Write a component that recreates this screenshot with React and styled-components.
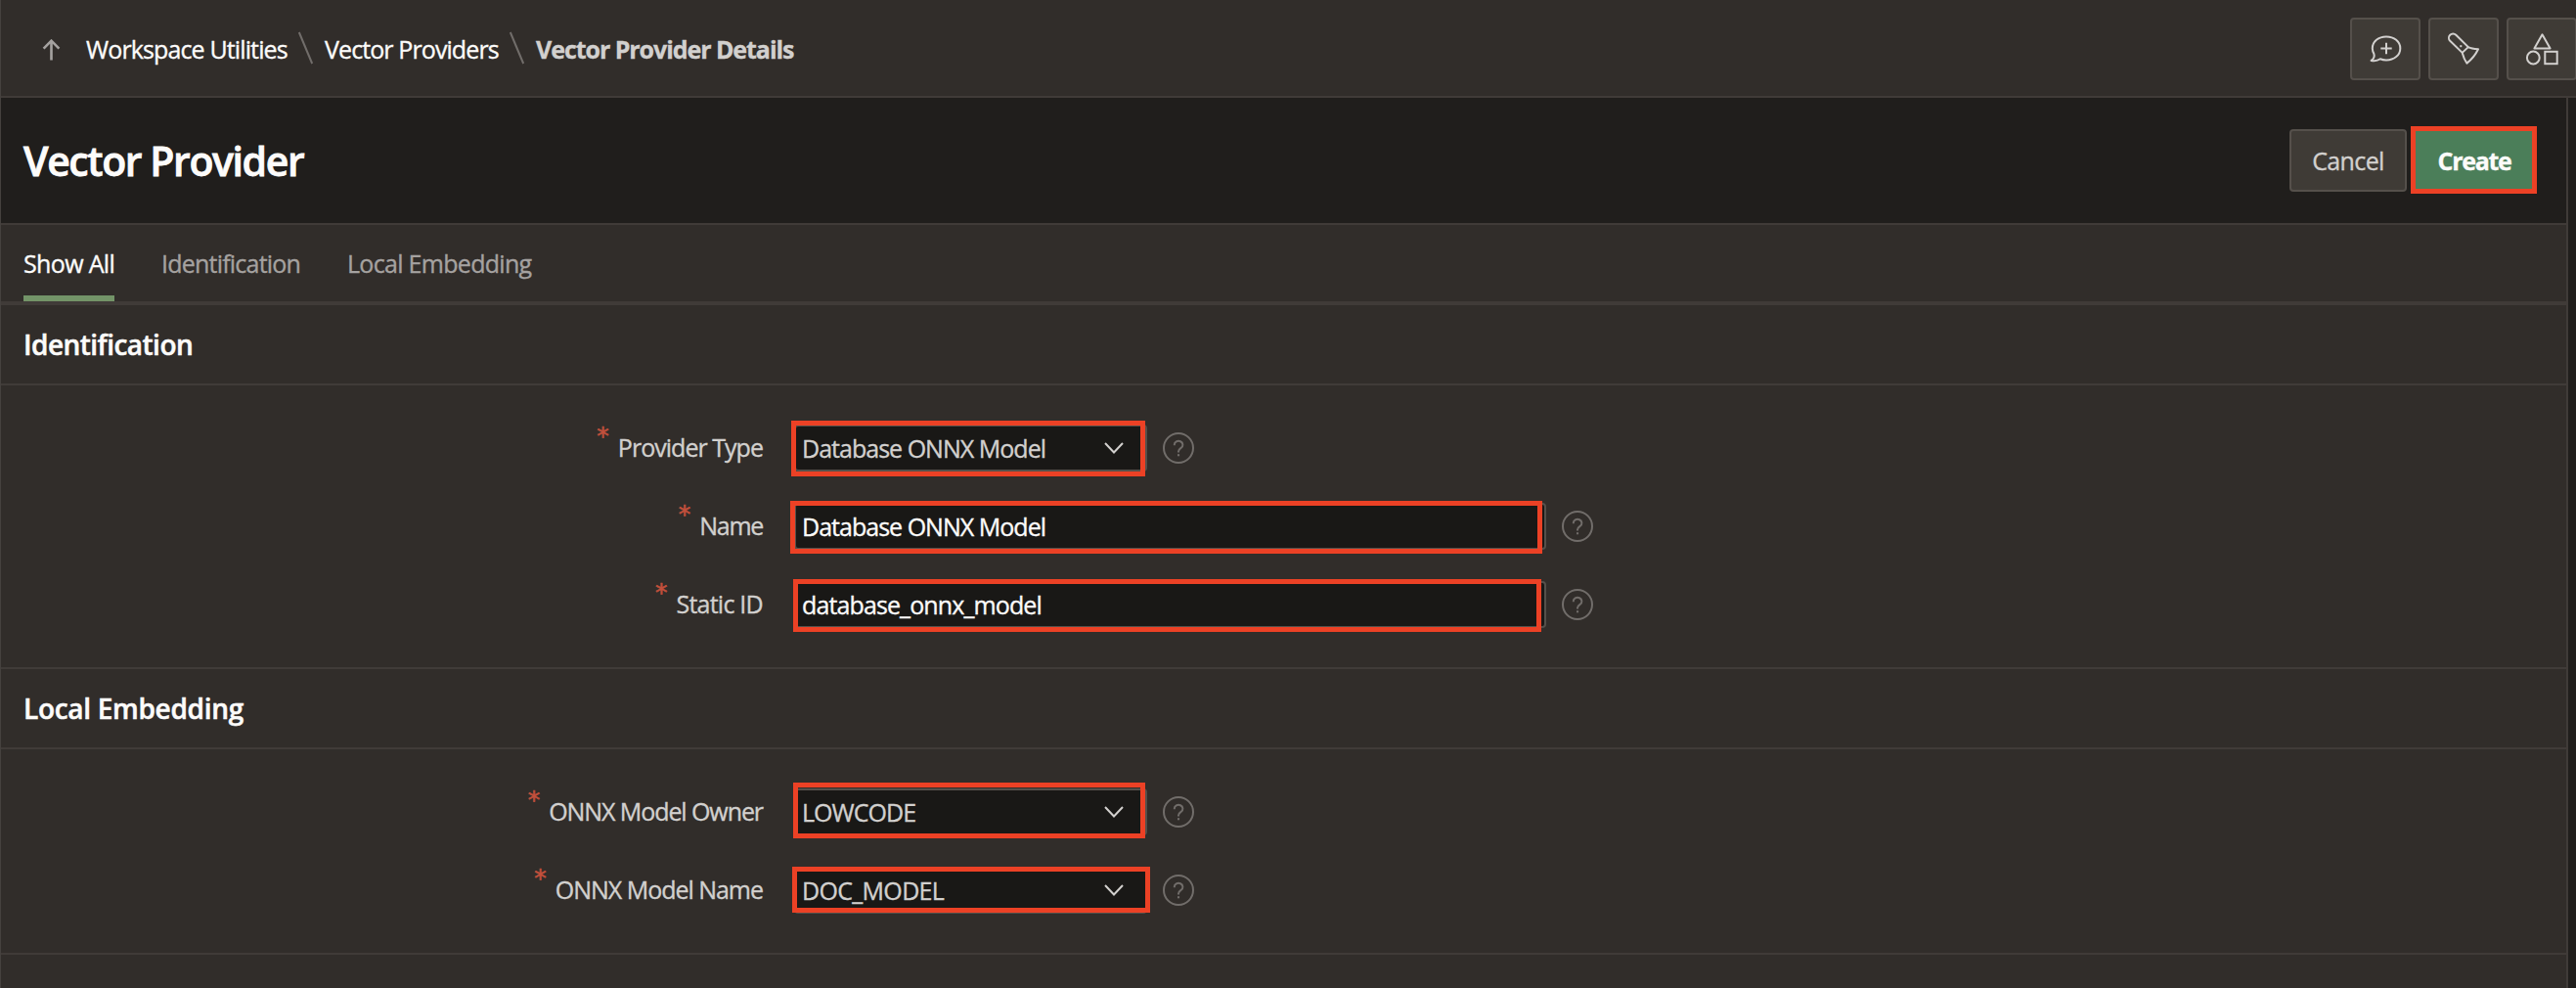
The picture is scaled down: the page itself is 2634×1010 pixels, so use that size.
import React from "react";
import styled, { createGlobalStyle } from "styled-components";

const c = {
  page: "#312d2a",
  dark: "#201e1c",
  field: "#191816",
  line: "#403b38",
  button: "#3f3b36",
  buttonLine: "#55504b",
  fieldLine: "#55504b",
  text: "#fcfbfa",
  soft: "#d2d0ce",
  muted: "#a5a2a0",
  dim: "#716d6a",
  green: "#4b7e59",
  tab: "#739468",
  red: "#ec4125",
  star: "#c2503c",
};

const GlobalStyle = createGlobalStyle`
  *, *::before, *::after { box-sizing: border-box; }
  html { overflow: hidden; }
  body {
    margin: 0;
    background: ${c.page};
    color: ${c.text};
    font-family: "Open Sans", "Noto Sans", sans-serif;
    font-size: 25px;
    line-height: 34px;
    -webkit-text-stroke: 0.35px currentColor;
  }
`;

const Page = styled.div`
  display: flex;
  flex-direction: column;
  height: 1010px;
  width: 2634px;
  overflow: hidden;
  border-left: 1px solid #45413e;
`;

const TopBar = styled.header`
  display: flex;
  justify-content: space-between;
  align-items: center;
  flex: none;
  height: 100px;
  padding-left: 42px;
  border-bottom: 2px solid ${c.line};
`;

const Crumbs = styled.nav`
  display: flex;
  align-items: center;
`;

const UpIcon = styled.svg`
  margin-right: 26px;
  margin-top: 4px;
`;

const Crumb = styled.span`
  width: ${(p) => p.$w}px;
  padding-top: 1px;
  white-space: nowrap;
  letter-spacing: ${(p) => p.$ls}px;
  font-weight: ${(p) => (p.$current ? 700 : 400)};
  color: ${(p) => (p.$current ? c.soft : c.text)};
`;

const Slash = styled.svg`
  margin: 0 10px 0 9px;
`;

const Tools = styled.div`
  display: flex;
  gap: 8px;
  margin: 2px -1px 0 0;
`;

const ToolButton = styled.button`
  width: 72px;
  height: 64px;
  padding: 0;
  display: flex;
  align-items: center;
  justify-content: center;
  background: ${c.button};
  border: 2px solid ${c.buttonLine};
  border-radius: 4px;
  color: ${c.soft};
`;

const Body = styled.div`
  flex: 1;
  display: flex;
  background: ${c.dark};
`;

const Main = styled.main`
  width: 2625px;
  border-right: 2px solid ${c.line};
  background: ${c.page};
`;

const TitleBar = styled.div`
  display: flex;
  align-items: center;
  justify-content: space-between;
  height: 130px;
  padding: 0 33px 0 23px;
  background: ${c.dark};
  border-bottom: 2px solid ${c.line};
`;

const Title = styled.h1`
  margin: 0;
  font-size: 41px;
  font-weight: 600;
  line-height: 56px;
  letter-spacing: -1.4px;
  -webkit-text-stroke-width: 0.8px;
`;

const Actions = styled.div`
  display: flex;
  gap: 8px;
`;

const Button = styled.button`
  position: relative;
  width: ${(p) => p.$w}px;
  height: 64px;
  padding: 0 0 1px;
  background: ${(p) => (p.$hot ? c.green : c.button)};
  border: 2px solid ${(p) => (p.$hot ? c.green : c.buttonLine)};
  border-radius: 4px;
  color: ${(p) => (p.$hot ? c.text : c.soft)};
  font: ${(p) => (p.$hot ? 700 : 400)} 25px "Open Sans", sans-serif;
  letter-spacing: ${(p) => (p.$hot ? -1.3 : -0.6)}px;
`;

const Frame = styled.span`
  position: absolute;
  inset: ${(p) => p.$inset};
  border: 5px solid ${c.red};
  pointer-events: none;
`;

const Tabs = styled.div`
  display: flex;
  gap: 48px;
  height: 82px;
  padding-left: 23px;
  border-bottom: 4px solid ${c.line};
`;

const Tab = styled.div`
  width: ${(p) => p.$w}px;
  height: 78px;
  line-height: 78px;
  white-space: nowrap;
  letter-spacing: ${(p) => p.$ls}px;
  color: ${(p) => (p.$active ? c.text : c.muted)};
  box-shadow: ${(p) => (p.$active ? `inset 0 -6px ${c.tab}` : "none")};
`;

const SectionTitle = styled.h2`
  margin: 0;
  height: 82px;
  padding-left: 23px;
  font-size: 28px;
  line-height: 80px;
  font-weight: 600;
  letter-spacing: ${(p) => p.$ls}px;
  -webkit-text-stroke-width: 0.5px;
  border-bottom: 2px solid ${c.line};
`;

const Form = styled.div`
  display: grid;
  row-gap: 32px;
  padding: 40px 0;
  border-bottom: 2px solid ${c.line};
`;

const Row = styled.div`
  display: grid;
  grid-template-columns: 779px auto 32px;
  height: 48px;
  justify-content: start;
  align-items: center;
`;

const Label = styled.label`
  display: flex;
  justify-content: flex-end;
  height: 48px;
  line-height: 47px;
  color: ${c.soft};
  letter-spacing: ${(p) => p.$ls}px;
`;

const Star = styled.span`
  margin-right: 9px;
  font-family: "DejaVu Sans", sans-serif;
  line-height: 24px;
  letter-spacing: 0;
  color: ${c.star};
  -webkit-text-stroke-width: 0.6px;
`;

const Field = styled.div`
  position: relative;
  display: flex;
  align-items: center;
  justify-content: space-between;
  width: ${(p) => p.$w}px;
  height: 48px;
  margin: 0 16px 0 32px;
  padding: 0 22px 1px 6px;
  background: ${c.field};
  border: 2px solid ${c.fieldLine};
  border-radius: 4px;
  color: ${(p) => (p.$select ? c.soft : c.text)};
  letter-spacing: ${(p) => p.$ls}px;
`;

const Help = styled.svg`
  display: block;
`;

const stroke = { fill: "none", stroke: "currentColor", strokeWidth: 2, strokeLinejoin: "round" };

const SlashMark = () => (
  <Slash width="19" height="34" viewBox="0 0 19 34">
    <path d="M2.8 1L16.2 33" fill="none" stroke={c.dim} strokeWidth="2" />
  </Slash>
);

const FormRow = ({ label, lls, value, ls, select, frame }) => (
  <Row>
    <Label $ls={lls}>
      <Star>*</Star>
      {label}
    </Label>
    <Field $select={select} $w={select ? 361 : 769} $ls={ls}>
      {value}
      {select && (
        <svg width="20" height="14" viewBox="0 0 20 14">
          <path d="M1 2L10 11.5L19 2" {...stroke} strokeLinejoin="miter" />
        </svg>
      )}
      <Frame $inset={frame} />
    </Field>
    <Help width="32" height="32" viewBox="0 0 32 32">
      <circle cx="16" cy="16" r="15" fill="none" stroke={c.dim} strokeWidth="2" />
      <path
        d="M11.8 13.2V12.8A4.3 3.9 0 1 1 18.6 15.9C17 17 16 17.7 16 19.6V20.4"
        fill="none"
        stroke={c.dim}
        strokeWidth="2"
      />
      <rect x="15" y="22.2" width="2.1" height="2.1" fill={c.dim} />
    </Help>
  </Row>
);

export default function App() {
  return (
    <>
      <GlobalStyle />
      <Page>
        <TopBar>
          <Crumbs>
            <UpIcon width="19" height="22" viewBox="0 0 19 22">
              <path d="M9.5 21.5V2M1.6 9.6L9.5 1.7L17.4 9.6" fill="none" stroke={c.muted} strokeWidth="2.6" />
            </UpIcon>
            <Crumb $w={206} $ls={-0.87}>Workspace Utilities</Crumb>
            <SlashMark />
            <Crumb $w={178} $ls={-0.9}>Vector Providers</Crumb>
            <SlashMark />
            <Crumb $w={264} $ls={-1.06} $current>Vector Provider Details</Crumb>
          </Crumbs>
          <Tools>
            <ToolButton aria-label="Feedback">
              <svg width="34" height="34" viewBox="0 0 34 34" {...stroke}>
                <path d="M2.6 28.9C5.6 26.8 6.2 24.6 5.4 22.1A12 12 0 0 1 3.8 16.5C3.8 9.2 10 4.4 18 4.4S32.3 9.4 32.3 16.4S26 28.4 18 28.4C15.6 28.4 13.6 28 11.8 27.3C9.4 29 6.2 29.7 2.6 28.9Z" />
                <path d="M18 10.8V22.2M12.3 16.5H23.7" />
              </svg>
            </ToolButton>
            <ToolButton aria-label="Search">
              <svg width="34" height="34" viewBox="0 0 34 34" {...stroke}>
                <path d="M15.7 20.9L3.2 8.8A4.3 4.3 0 0 1 9.3 2.7L21.8 15.1C24.5 16.6 28.3 17 32 17.2C29.4 22.6 25.5 27.6 20.4 31.6C18 28.2 16.8 25 15.7 20.9ZM15.7 20.9L21.8 15.1" />
                <path d="M13.3 14.2H15.3" />
              </svg>
            </ToolButton>
            <ToolButton aria-label="Shapes">
              <svg width="34" height="34" viewBox="0 0 34 34" {...stroke}>
                <path d="M17.5 2.3L25.6 16.4H9.4Z" />
                <circle cx="8.3" cy="26" r="6.4" />
                <rect x="20.3" y="19.8" width="12.4" height="12.4" strokeLinejoin="miter" />
              </svg>
            </ToolButton>
          </Tools>
        </TopBar>
        <Body>
          <Main>
            <TitleBar>
              <Title>Vector Provider</Title>
              <Actions>
                <Button $w={120}>Cancel</Button>
                <Button $w={122} $hot>
                  Create
                  <Frame $inset="-5px -5px -4px -6px" />
                </Button>
              </Actions>
            </TitleBar>
            <Tabs>
              <Tab $w={93} $ls={-0.65} $active>Show All</Tab>
              <Tab $w={142} $ls={-0.78}>Identification</Tab>
              <Tab $w={190} $ls={-0.7}>Local Embedding</Tab>
            </Tabs>
            <SectionTitle $ls={-0.53}>Identification</SectionTitle>
            <Form>
              <FormRow label="Provider Type" lls={-0.97} value="Database ONNX Model" ls={-0.98} select frame="-6px 0px -7px -5px" />
              <FormRow label="Name" lls={-1.3} value="Database ONNX Model" ls={-0.98} frame="-4px 2px -6px -6px" />
              <FormRow label="Static ID" lls={-0.75} value="database_onnx_model" ls={-0.88} frame="-4px 3px -6px -3px" />
            </Form>
            <SectionTitle $ls={-0.3}>Local Embedding</SectionTitle>
            <Form>
              <FormRow label="ONNX Model Owner" lls={-1.08} value="LOWCODE" ls={-0.95} select frame="-8px 0px -5px -3px" />
              <FormRow label="ONNX Model Name" lls={-1.03} value="DOC_MODEL" ls={-0.68} select frame="-2px -5px -1px -4px" />
            </Form>
          </Main>
        </Body>
      </Page>
    </>
  );
}
